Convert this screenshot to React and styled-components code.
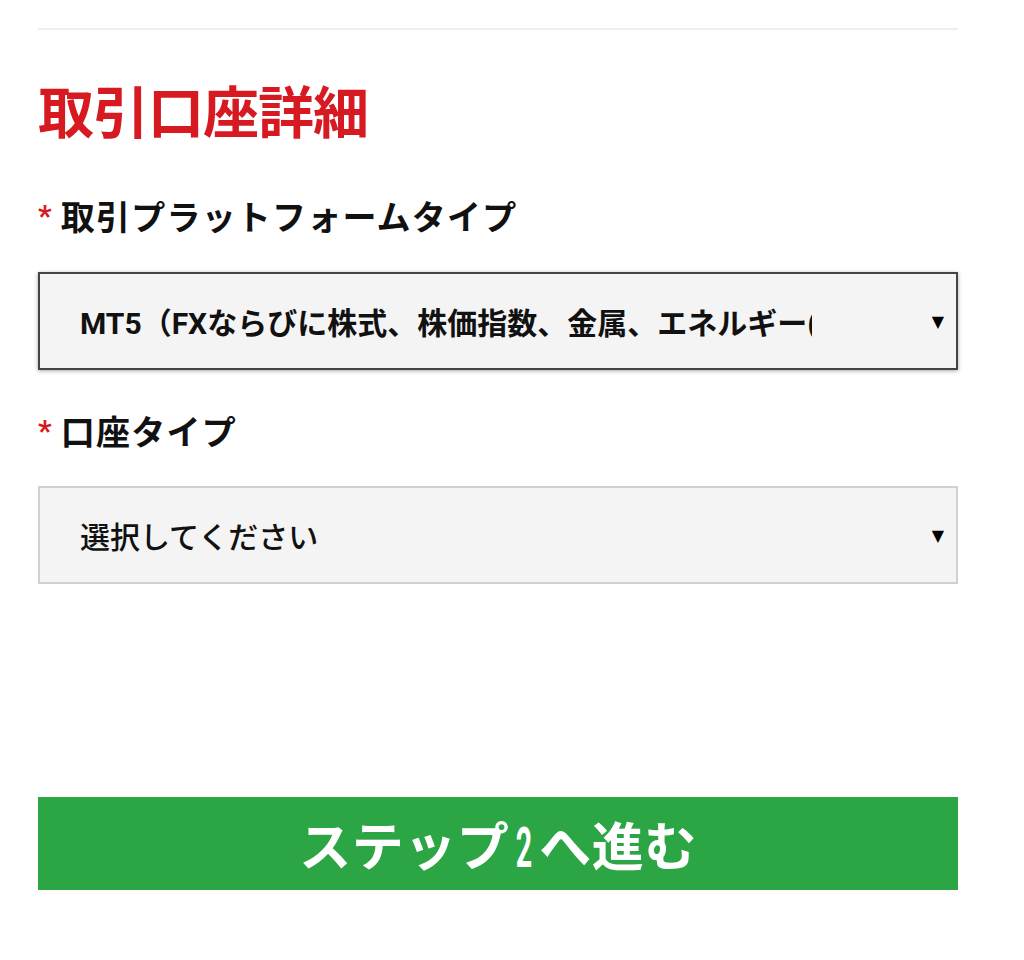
import React from 'react';
import styled, { createGlobalStyle } from 'styled-components';

const colors = {
  red: '#d71a21',
  green: '#2ca545',
  text: '#111111',
  field: '#f4f4f4',
  line: '#eeeeee',
};

const GlobalStyle = createGlobalStyle`
  html, body {
    margin: 0;
    padding: 0;
    background: #ffffff;
  }
  body {
    font-family: Roboto, "Noto Sans CJK JP", sans-serif;
    color: ${colors.text};
  }
`;

const Page = styled.div`
  width: 920px;
  margin-left: 38px;
  padding-top: 28px;
  padding-bottom: 70px;
`;

const Divider = styled.hr`
  margin: 0;
  border: none;
  height: 2px;
  background: ${colors.line};
`;

const Title = styled.h2`
  margin: 52px 0 0;
  height: 64px;
  line-height: 64px;
  font-size: 56px;
  font-weight: 700;
  color: ${colors.red};
  letter-spacing: -1px;
`;

const Label = styled.div`
  margin-top: ${props => props.top}px;
  height: 40px;
  line-height: 40px;
  font-size: 34px;
  font-weight: 700;
  letter-spacing: 1.2px;
  display: flex;
  align-items: center;
`;

const Required = styled.span`
  color: ${colors.red};
  font-size: 30px;
  margin-right: 8px;
  position: relative;
  top: -2px;
`;

const Select = styled.div`
  margin-top: ${props => props.top}px;
  height: 98px;
  box-sizing: border-box;
  background: ${colors.field};
  border: 2px solid ${props => (props.active ? '#444444' : '#d0d0d0')};
  box-shadow: ${props => (props.active ? '0 1px 4px rgba(0, 0, 0, 0.35)' : 'none')};
  display: flex;
  align-items: center;
  padding: 0 12px 0 40px;
  cursor: pointer;
`;

const SelectValue = styled.span`
  flex: 0 0 732px;
  overflow: hidden;
  white-space: nowrap;
  font-size: 30px;
  font-weight: ${props => (props.strong ? 700 : 500)};
  color: ${colors.text};
`;

const Arrow = styled.span`
  margin-left: auto;
  font-family: "DejaVu Sans", sans-serif;
  font-size: 16px;
  color: #000000;
`;

const SubmitButton = styled.button`
  display: block;
  width: 100%;
  height: 93px;
  margin-top: 213px;
  border: none;
  background: ${colors.green};
  color: #ffffff;
  font-family: Roboto, "Noto Sans CJK JP", sans-serif;
  font-size: 52px;
  font-weight: 700;
  letter-spacing: 0.5px;
  cursor: pointer;
`;

const NarrowDigit = styled.span`
  display: inline-block;
  width: 30px;
  text-align: center;
  transform: scale(0.55, 1.08);
`;

const AccountDetails = () => {
  return (
    <Page>
      <GlobalStyle />
      <Divider />
      <Title>取引口座詳細</Title>

      <Label top={52}>
        <Required>*</Required>取引プラットフォームタイプ
      </Label>
      <Select active top={34}>
        <SelectValue strong>MT5（FXならびに株式、株価指数、金属、エネルギー(CFD)）</SelectValue>
        <Arrow>▼</Arrow>
      </Select>

      <Label top={43}>
        <Required>*</Required>口座タイプ
      </Label>
      <Select top={33}>
        <SelectValue>選択してください</SelectValue>
        <Arrow>▼</Arrow>
      </Select>

      <SubmitButton type="button">
        ステップ<NarrowDigit>2</NarrowDigit>へ進む
      </SubmitButton>
    </Page>
  );
};

export default AccountDetails;
